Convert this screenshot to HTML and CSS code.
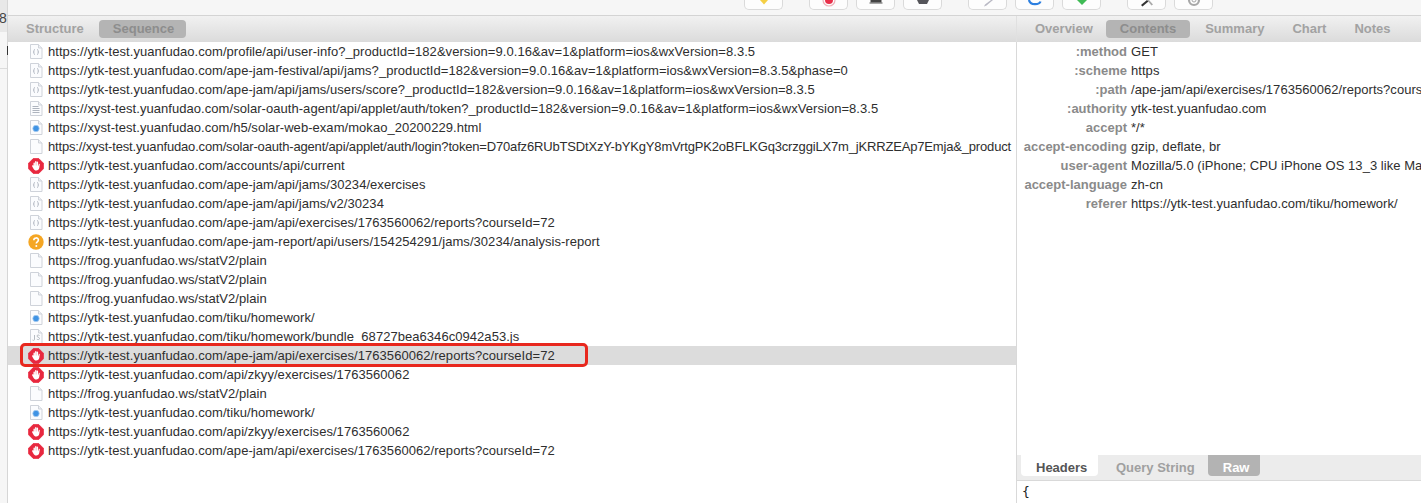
FILE: index.html
```html
<!DOCTYPE html>
<html lang="en">
<head>
<meta charset="utf-8">
<title>Charles</title>
<link rel="stylesheet" href="styles.css">
</head>
<body>
<svg class="defs" width="0" height="0" aria-hidden="true">
  <defs>
    <symbol id="doc" viewBox="0 0 14 15">
      <path d="M1.500.5h8l3.500 3.500v10.500h-11.500z" fill="#fbfcfe" stroke="#cfd3da"/>
      <path d="M9.500.5v3.500h3.500" fill="#eef0f4" stroke="#cfd3da"/>
    </symbol>
    <symbol id="json" viewBox="0 0 14 15">
      <use href="#doc"/>
      <path d="M6 5.500c-1 0-1 .5-1 1.500s-.5 1-1 1c.5 0 1 0 1 1s0 1.500 1 1.500M8 5.500c1 0 1 .5 1 1.500s.5 1 1 1c-.5 0-1 0-1 1s0 1.500-1 1.500" fill="none" stroke="#9aa1ad" stroke-width=".7"/>
    </symbol>
    <symbol id="text" viewBox="0 0 14 15">
      <use href="#doc"/>
      <path d="M3.500 5.500h6M3.500 7.500h7M3.500 9.500h7M3.500 11.500h7" stroke="#9aa1ad" stroke-width=".8"/>
    </symbol>
    <symbol id="html" viewBox="0 0 14 15">
      <use href="#doc"/>
      <circle cx="7" cy="8.500" r="3.200" fill="#3f93e4" stroke="#a9cdf0" stroke-width=".8"/>
    </symbol>
    <symbol id="js" viewBox="0 0 14 15">
      <use href="#doc"/>
      <path d="M5.500 6v4.500c0 1-1.300 1-2 .5M10.500 6.500c-1-.8-2.500-.5-2.500.5 0 1.500 2.500 1 2.500 2.500 0 1.300-1.700 1.300-2.700.7" fill="none" stroke="#a3a9b3" stroke-width=".8"/>
    </symbol>
    <symbol id="stop" viewBox="0 0 16 16">
      <path d="M5.200.6h5.600l4.600 4.600v5.600l-4.600 4.600H5.200L.6 10.800V5.200z" fill="#e8283f" stroke="#e8283f" stroke-width=".8" stroke-linejoin="round"/>
      <path d="M6.200 8.500V5.200M7.800 8.500V3.800M9.400 8.500V4.200" stroke="#fff" stroke-width="1.400" stroke-linecap="round"/>
      <path d="M5.500 7.500h5.200v-1.500c.6-.5 1.100-.1 1.100.4l-.5 3.400c-.3 1.700-1.400 2.700-3 2.700-1.300 0-2.200-.6-2.800-1.800L4.100 8.300c-.3-.8.8-1.300 1.400-.8z" fill="#fff"/>
    </symbol>
    <symbol id="warn" viewBox="0 0 16 16">
      <circle cx="8" cy="8" r="7.700" fill="#f5a623"/>
      <path d="M5.800 6.200c0-3 4.600-3 4.600-.2 0 1.800-2.100 1.800-2.100 3.500" fill="none" stroke="#fff" stroke-width="1.600"/>
      <circle cx="8.300" cy="12" r="1" fill="#fff"/>
    </symbol>
  </defs>
</svg>

<div class="app">
  <aside class="gutter">
    <div class="gutter-top"><span class="gutter-digit">8</span></div>
    <div class="gutter-mid"><span class="gutter-mark"></span></div>
  </aside>
  <div class="window">
    <header class="toolbar">
      <div class="tool"><svg class="tool-ico" viewBox="0 0 16 8"><path d="M4 0h8L8 4.500z" fill="#f4cf45"/></svg></div>
      <div class="tool-group">
        <div class="tool"><svg class="tool-ico" viewBox="0 0 16 8"><circle cx="8" cy="0" r="4" fill="#e9304a"/><circle cx="8" cy="0" r="6" fill="none" stroke="#eeb0b8" stroke-width="1.200"/></svg></div>
        <div class="tool"><svg class="tool-ico" viewBox="0 0 16 8"><path d="M2.500 0h11v2.500h-11z" fill="#444"/><path d="M1.500 3h13" stroke="#555" stroke-width="1"/></svg></div>
        <div class="tool"><svg class="tool-ico" viewBox="0 0 16 8"><path d="M2 0h12l-2 4H4z" fill="#55555a"/></svg></div>
      </div>
      <div class="tool-group">
        <div class="tool"><svg class="tool-ico" viewBox="0 0 16 8"><path d="M11 0 5 4.500 4 6.500l2.500-1L13 0z" fill="#b9b9c4"/></svg></div>
        <div class="tool"><svg class="tool-ico" viewBox="0 0 16 8"><path d="M2 0c.5 3 3 4.200 6 4.200S13 3 13.500 1.500" fill="none" stroke="#2c7fe0" stroke-width="2.200"/></svg></div>
        <div class="tool"><svg class="tool-ico" viewBox="0 0 16 8"><path d="M3 0h10L8 5z" fill="#3fbb55"/></svg></div>
      </div>
      <div class="tool-group">
        <div class="tool"><svg class="tool-ico" viewBox="0 0 16 8"><path d="M8 0 2 5l1.500 1.500L10 1z" fill="#333"/><path d="M8 0l4.500 5.500 1.500-1L10 0z" fill="#aaa"/></svg></div>
        <div class="tool"><svg class="tool-ico" viewBox="0 0 16 8"><path d="M3 0a5 5 0 0 0 10 0" fill="none" stroke="#a8a8a8" stroke-width="2.200"/><path d="M6 0a2 2 0 0 0 4 0" fill="none" stroke="#a8a8a8"/></svg></div>
      </div>
    </header>
    <div class="panes">
      <section class="list-pane">
        <nav class="tabbar tabbar-left">
          <span class="tab">Structure</span>
          <span class="tab tab-on">Sequence</span>
        </nav>
        <ul class="rows">
          <li class="row"><svg class="ico"><use href="#json"/></svg><span class="url">https://ytk-test.yuanfudao.com/profile/api/user-info?_productId=182&amp;version=9.0.16&amp;av=1&amp;platform=ios&amp;wxVersion=8.3.5</span></li>
          <li class="row"><svg class="ico"><use href="#json"/></svg><span class="url">https://ytk-test.yuanfudao.com/ape-jam-festival/api/jams?_productId=182&amp;version=9.0.16&amp;av=1&amp;platform=ios&amp;wxVersion=8.3.5&amp;phase=0</span></li>
          <li class="row"><svg class="ico"><use href="#json"/></svg><span class="url">https://ytk-test.yuanfudao.com/ape-jam/api/jams/users/score?_productId=182&amp;version=9.0.16&amp;av=1&amp;platform=ios&amp;wxVersion=8.3.5</span></li>
          <li class="row"><svg class="ico"><use href="#text"/></svg><span class="url">https://xyst-test.yuanfudao.com/solar-oauth-agent/api/applet/auth/token?_productId=182&amp;version=9.0.16&amp;av=1&amp;platform=ios&amp;wxVersion=8.3.5</span></li>
          <li class="row"><svg class="ico"><use href="#html"/></svg><span class="url">https://xyst-test.yuanfudao.com/h5/solar-web-exam/mokao_20200229.html</span></li>
          <li class="row"><svg class="ico"><use href="#doc"/></svg><span class="url url-tight">https://xyst-test.yuanfudao.com/solar-oauth-agent/api/applet/auth/login?token=D70afz6RUbTSDtXzY-bYKgY8mVrtgPK2oBFLKGq3crzggiLX7m_jKRRZEAp7Emja&amp;_product</span></li>
          <li class="row"><svg class="ico ico-round"><use href="#stop"/></svg><span class="url">https://ytk-test.yuanfudao.com/accounts/api/current</span></li>
          <li class="row"><svg class="ico"><use href="#json"/></svg><span class="url">https://ytk-test.yuanfudao.com/ape-jam/api/jams/30234/exercises</span></li>
          <li class="row"><svg class="ico"><use href="#json"/></svg><span class="url">https://ytk-test.yuanfudao.com/ape-jam/api/jams/v2/30234</span></li>
          <li class="row"><svg class="ico"><use href="#json"/></svg><span class="url">https://ytk-test.yuanfudao.com/ape-jam/api/exercises/1763560062/reports?courseId=72</span></li>
          <li class="row"><svg class="ico ico-round"><use href="#warn"/></svg><span class="url">https://ytk-test.yuanfudao.com/ape-jam-report/api/users/154254291/jams/30234/analysis-report</span></li>
          <li class="row"><svg class="ico"><use href="#doc"/></svg><span class="url">https://frog.yuanfudao.ws/statV2/plain</span></li>
          <li class="row"><svg class="ico"><use href="#doc"/></svg><span class="url">https://frog.yuanfudao.ws/statV2/plain</span></li>
          <li class="row"><svg class="ico"><use href="#doc"/></svg><span class="url">https://frog.yuanfudao.ws/statV2/plain</span></li>
          <li class="row"><svg class="ico"><use href="#html"/></svg><span class="url">https://ytk-test.yuanfudao.com/tiku/homework/</span></li>
          <li class="row"><svg class="ico"><use href="#js"/></svg><span class="url">https://ytk-test.yuanfudao.com/tiku/homework/bundle_68727bea6346c0942a53.js</span></li>
          <li class="row row-on"><svg class="ico ico-round"><use href="#stop"/></svg><span class="url">https://ytk-test.yuanfudao.com/ape-jam/api/exercises/1763560062/reports?courseId=72</span><span class="callout"></span></li>
          <li class="row"><svg class="ico ico-round"><use href="#stop"/></svg><span class="url">https://ytk-test.yuanfudao.com/api/zkyy/exercises/1763560062</span></li>
          <li class="row"><svg class="ico"><use href="#doc"/></svg><span class="url">https://frog.yuanfudao.ws/statV2/plain</span></li>
          <li class="row"><svg class="ico"><use href="#html"/></svg><span class="url">https://ytk-test.yuanfudao.com/tiku/homework/</span></li>
          <li class="row"><svg class="ico ico-round"><use href="#stop"/></svg><span class="url">https://ytk-test.yuanfudao.com/api/zkyy/exercises/1763560062</span></li>
          <li class="row"><svg class="ico ico-round"><use href="#stop"/></svg><span class="url">https://ytk-test.yuanfudao.com/ape-jam/api/exercises/1763560062/reports?courseId=72</span></li>
        </ul>
      </section>
      <section class="detail-pane">
        <nav class="tabbar tabbar-right">
          <span class="tab">Overview</span>
          <span class="tab tab-on">Contents</span>
          <span class="tab">Summary</span>
          <span class="tab">Chart</span>
          <span class="tab">Notes</span>
        </nav>
        <dl class="headers">
          <div class="hrow"><dt>:method</dt><dd>GET</dd></div>
          <div class="hrow"><dt>:scheme</dt><dd>https</dd></div>
          <div class="hrow"><dt>:path</dt><dd>/ape-jam/api/exercises/1763560062/reports?courseId=72</dd></div>
          <div class="hrow"><dt>:authority</dt><dd>ytk-test.yuanfudao.com</dd></div>
          <div class="hrow"><dt>accept</dt><dd>*/*</dd></div>
          <div class="hrow"><dt>accept-encoding</dt><dd>gzip, deflate, br</dd></div>
          <div class="hrow"><dt>user-agent</dt><dd>Mozilla/5.0 (iPhone; CPU iPhone OS 13_3 like Mac OS X)</dd></div>
          <div class="hrow"><dt>accept-language</dt><dd>zh-cn</dd></div>
          <div class="hrow"><dt>referer</dt><dd>https://ytk-test.yuanfudao.com/tiku/homework/</dd></div>
        </dl>
        <nav class="subtabs">
          <span class="subtab subtab-white">Headers</span>
          <span class="subtab subtab-query">Query String</span>
          <span class="subtab subtab-on">Raw</span>
        </nav>
        <pre class="raw">{</pre>
      </section>
    </div>
  </div>
</div>
</body>
</html>
```

FILE: styles.css
```css
* { box-sizing: border-box; }
html, body { margin: 0; padding: 0; height: 100%; background: #fff; overflow: hidden; }
body { font-family: "Liberation Sans", Arial, sans-serif; font-size: 13px; color: #2b2b2b; }
.defs { display: block; height: 0; }
.app { display: flex; height: 503px; overflow: hidden; }

.gutter { width: 8px; flex: none; background: #f6f6f6; border-right: 1px solid #d6d6d6; display: flex; flex-direction: column; }
.gutter-top { height: 32px; background: #e8e8e8; padding-top: 11px; overflow: hidden; }
.gutter-digit { font-size: 14px; line-height: 15px; display: block; margin-left: -1px; color: #444; }
.gutter-mid { height: 37px; padding-top: 14px; border-bottom: 1px solid #dcdcdc; display: flex; justify-content: flex-end; align-items: flex-start; }
.gutter-mark { width: 1px; height: 9px; background: #333; margin-right: -1px; }

.window { flex: 1; min-width: 0; display: flex; flex-direction: column; }

.toolbar { height: 16px; flex: none; display: flex; align-items: flex-end; gap: 26px; padding: 0 0 5px 736px; background: #f6f6f6; border-bottom: 1px solid #d4d4d4; overflow: hidden; }
.tool-group { display: flex; gap: 8px; }
.tool { width: 39px; height: 10px; flex: none; background: #fdfdfd; border: 1px solid #dadada; border-top: 0; border-radius: 0 0 5px 5px; display: flex; justify-content: center; }
.tool-ico { width: 16px; height: 8px; }

.panes { flex: 1; min-height: 0; display: flex; }
.list-pane { width: 1009px; flex: none; display: flex; flex-direction: column; border-right: 1px solid #d9d9d9; overflow: hidden; }
.detail-pane { flex: 1; min-width: 0; display: flex; flex-direction: column; }

.tabbar { height: 26px; flex: none; display: flex; align-items: center; background: linear-gradient(#f1f1f1, #dbdbdb); font-weight: 700; font-size: 13px; color: #a2a2a2; }
.tabbar-left { padding-left: 6px; gap: 3px; }
.tabbar-right { padding-left: 4px; border-left: 1px solid #e0e0e0; margin-left: -1px; }
.tab { height: 18px; line-height: 18px; padding: 0 14px; border-radius: 4px; white-space: nowrap; }
.tabbar-left .tab:first-child { padding: 0 12px; }
.tabbar-left .tab-on { padding: 0 12px 0 14px; }
.tabbar-right .tab { padding: 0 14px; }
.tabbar-right .tab-on { margin: 0 1px 0 -1px; }
.tab-on { background: #b4b4b4; color: #8d8d8d; }

.rows { list-style: none; margin: 0; padding: 0; flex: 1; min-height: 0; overflow: hidden; }
.row { position: relative; height: 19px; display: flex; align-items: center; padding-left: 20px; white-space: nowrap; }
.row-on { background: #dcdcdc; }
.ico { width: 14px; height: 15px; flex: none; margin-left: 1px; margin-right: 5px; }
.ico-round { width: 16px; height: 16px; margin-left: 0; margin-right: 4px; }
.url { font-size: 13px; letter-spacing: .05px; color: #2e2e2e; }
.url-tight { letter-spacing: -.17px; }
.callout { position: absolute; left: 12px; top: -3px; width: 568px; height: 24px; border: 3px solid #e8281e; border-radius: 5px; pointer-events: none; }

.headers { margin: 0; flex: 1; min-height: 0; overflow: hidden; }
.hrow { height: 19px; display: flex; align-items: center; white-space: nowrap; }
.hrow dt { width: 110px; flex: none; text-align: right; font-weight: 700; color: #8a8a8a; }
.hrow dd { margin: 0 0 0 4px; letter-spacing: .05px; color: #2e2e2e; }

.subtabs { height: 25px; flex: none; display: flex; padding-left: 4px; background: #ececec; font-weight: 700; color: #a0a0a0; }
.subtab { height: 21px; line-height: 26px; padding: 0 15px; border-radius: 0 0 4px 4px; }
.subtab-white { width: 77px; background: #fff; color: #555; margin-right: 3px; }
.subtab-query { padding: 0 13px 0 15px; }
.subtab-on { padding: 0 11px 0 15px; background: #b3b3b3; color: #fff; }
.raw { height: 23px; flex: none; margin: 0; padding: 3px 5px; border-top: 1px solid #d9d9d9; font-family: "DejaVu Sans Mono", monospace; font-size: 13px; line-height: 15px; color: #222; overflow: hidden; }
```
